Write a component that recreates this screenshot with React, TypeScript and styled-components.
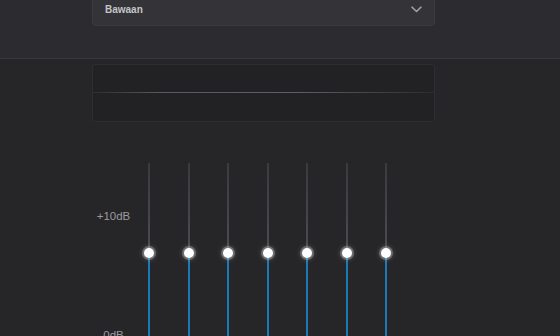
import styled, { createGlobalStyle } from 'styled-components';

const Global = createGlobalStyle`
  html, body {
    margin: 0;
    padding: 0;
    background: #262629;
    overflow: hidden;
  }
  body {
    font-family: 'Liberation Sans', Arial, sans-serif;
  }
`;

const Page = styled.div`
  width: 560px;
  height: 336px;
  overflow: hidden;
  background: #262629;
`;

// top part, holds the preset select, ends with the divider line
const Header = styled.div`
  display: flow-root;
  height: 59px;
  background: #2b2b30;
  border-bottom: 1px solid #38383e;
  box-sizing: border-box;
  padding-left: 92px;
`;

const Select = styled.div`
  width: 343px;
  height: 33px;
  margin-top: -7px;
  box-sizing: border-box;
  display: flex;
  align-items: center;
  justify-content: space-between;
  padding: 0 12px;
  background: #333338;
  border: 1px solid #3b3b41;
  border-radius: 4px;
  color: #c4c4c8;
  font-size: 10px;
  font-weight: bold;
`;

const Chevron = styled.svg`
  width: 11px;
  height: 7px;
`;

const Screen = styled.div`
  width: 343px;
  height: 58px;
  margin: 5px 0 0 92px;
  box-sizing: border-box;
  background: #222225;
  border: 1px solid #2d2d32;
  border-radius: 3px;
  padding-top: 27px;
`;

const Trace = styled.div`
  height: 1px;
  background: linear-gradient(
    90deg,
    rgba(90, 90, 96, 0.2) 0%,
    #5a5a60 20%,
    #5e5e64 60%,
    rgba(90, 90, 96, 0.2) 100%
  );
`;

const EqRow = styled.div`
  display: flex;
  padding: 41px 0 0 92px;
`;

const Scale = styled.div`
  width: 43px;
  display: flex;
  flex-direction: column;
  align-items: center;
  padding-top: 47px;
  color: #9a9a9f;
  font-size: 11.5px;
  line-height: 13px;
`;

const ScaleLabel = styled.div<{ $gap?: number }>`
  margin-top: ${(p) => p.$gap ?? 0}px;
  white-space: nowrap;
`;

const Bands = styled.div`
  display: flex;
  gap: 25.5px;
  margin-left: 7px;
`;

const Band = styled.div`
  width: 14px;
  display: flex;
  flex-direction: column;
  align-items: center;
`;

const Rail = styled.div<{ $h: number }>`
  width: 2px;
  height: ${(p) => p.$h}px;
  background: linear-gradient(180deg, #3a3a3f 0%, #4b4b51 100%);
`;

const Fill = styled.div`
  width: 2px;
  height: 120px;
  margin-top: -2px;
  background: #1a7ab8;
`;

const Knob = styled.div`
  width: 10px;
  height: 10px;
  border-radius: 50%;
  background: #ffffff;
  box-shadow: 0 0 0 2px rgba(200, 200, 205, 0.35),
    0 0 5px 2px rgba(255, 255, 255, 0.18);
  position: relative;
  z-index: 1;
`;

const bands = [0, 1, 2, 3, 4, 5, 6];

export default function App() {
  return (
    <Page>
      <Global />
      <Header>
        <Select>
          <span>Bawaan</span>
          <Chevron viewBox="0 0 11 7">
            <path
              d="M1 1.2 L5.5 5.5 L10 1.2"
              fill="none"
              stroke="#9c9ca2"
              strokeWidth="1.6"
              strokeLinecap="round"
              strokeLinejoin="round"
            />
          </Chevron>
        </Select>
      </Header>
      <Screen>
        <Trace />
      </Screen>
      <EqRow>
        <Scale>
          <ScaleLabel>+10dB</ScaleLabel>
          <ScaleLabel $gap={106}>0dB</ScaleLabel>
        </Scale>
        <Bands>
          {bands.map((b) => (
            <Band key={b}>
              <Rail $h={85} />
              <Knob />
              <Fill />
            </Band>
          ))}
        </Bands>
      </EqRow>
    </Page>
  );
}
